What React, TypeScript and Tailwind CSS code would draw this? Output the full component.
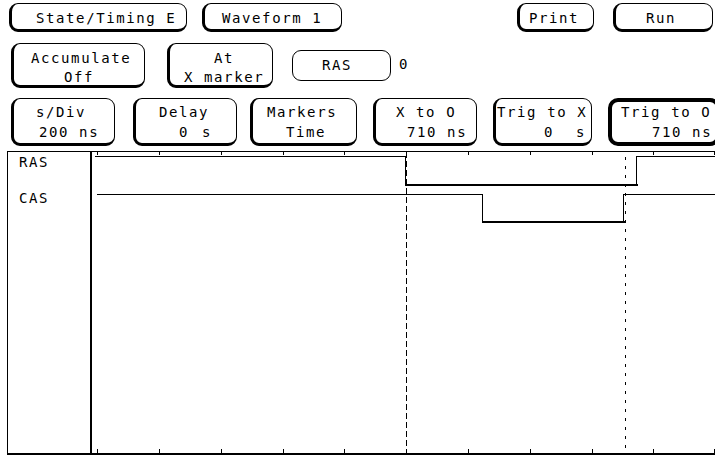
import React from "react";

function Btn({ className, children }: { className: string; children: React.ReactNode }) {
  return <div className={"shrink-0 box-border border-black bg-white " + className}>{children}</div>;
}

const ticks = [5, 67, 129, 191, 252, 314, 376, 438, 500, 561, 622];

export default function App() {
  return (
    <div className="w-[715px] h-[459px] bg-white overflow-hidden text-black font-['DejaVu_Sans_Mono',monospace] text-[14px] tracking-[1.6px] whitespace-pre">
      {/* Row 1 */}
      <div className="flex pt-[3px]">
        <Btn className="ml-[9px] w-[178px] h-[29px] rounded-[9px] border border-l-[3px] border-b-[3px] pt-[4px] leading-[20px]">
          <div className="pl-[24px]">State/Timing E</div>
        </Btn>
        <Btn className="ml-[15px] w-[140px] h-[29px] rounded-[9px] border border-l-[3px] border-b-[3px] pt-[4px] leading-[20px]">
          <div className="pl-[17px]">Waveform 1</div>
        </Btn>
        <Btn className="ml-[175px] w-[77px] h-[29px] rounded-[9px] border border-l-[3px] border-b-[3px] pt-[4px] leading-[20px]">
          <div className="pl-[9px]">Print</div>
        </Btn>
        <Btn className="ml-[19px] w-[100px] h-[29px] rounded-[9px] border border-l-[3px] border-b-[3px] pt-[4px] leading-[20px]">
          <div className="pl-[30px]">Run</div>
        </Btn>
      </div>

      {/* Row 2 */}
      <div className="flex items-start mt-[11px]">
        <Btn className="ml-[11px] w-[134px] h-[45px] rounded-[9px] border border-l-[3px] border-b-[3px] pt-[5px] leading-[18.5px]">
          <div className="pl-[17px]">Accumulate</div>
          <div className="pl-[50px]">Off</div>
        </Btn>
        <Btn className="ml-[22px] w-[106px] h-[45px] rounded-[9px] border border-l-[3px] border-b-[3px] pt-[5px] leading-[18.5px]">
          <div className="pl-[44px]">At</div>
          <div className="pl-[14px]">X marker</div>
        </Btn>
        <Btn className="ml-[19px] mt-[7px] w-[99px] h-[31px] rounded-[9px] border pt-[4px] leading-[20px]">
          <div className="pl-[29px]">RAS</div>
        </Btn>
        <div className="shrink-0 ml-[8px] mt-[11px] leading-[20px]">0</div>
      </div>

      {/* Row 3 */}
      <div className="flex items-start mt-[10px]">
        <Btn className="ml-[11px] w-[104px] h-[48px] rounded-[9px] border border-l-[3px] border-b-[3px] pt-[3px] leading-[20px]">
          <div className="pl-[22px]">s/Div</div>
          <div className="pl-[25px]">200 ns</div>
        </Btn>
        <Btn className="ml-[18px] w-[104px] h-[48px] rounded-[9px] border border-l-[3px] border-b-[3px] pt-[3px] leading-[20px]">
          <div className="pl-[23px]">Delay</div>
          <div className="pl-[43px] flex">
            <span>0</span>
            <span className="ml-[13px]">s</span>
          </div>
        </Btn>
        <Btn className="ml-[13px] w-[107px] h-[48px] rounded-[9px] border border-l-[3px] border-b-[3px] pt-[3px] leading-[20px]">
          <div className="pl-[14px]">Markers</div>
          <div className="pl-[33px]">Time</div>
        </Btn>
        <Btn className="ml-[16px] w-[104px] h-[48px] rounded-[9px] border border-l-[3px] border-b-[3px] pt-[3px] leading-[20px]">
          <div className="pl-[20px]">X to O</div>
          <div className="pl-[31px]">710 ns</div>
        </Btn>
        <Btn className="ml-[16px] w-[99px] h-[48px] rounded-[9px] border border-l-[3px] border-b-[3px] pt-[3px] leading-[20px]">
          <div className="pl-[1px]">Trig to X</div>
          <div className="pl-[48px] flex">
            <span>0</span>
            <span className="ml-[22px]">s</span>
          </div>
        </Btn>
        <Btn className="ml-[16px] w-[112px] h-[48px] rounded-[10px] border-[4px] pt-[0px] leading-[20px]">
          <div className="pl-[9px]">Trig to O</div>
          <div className="pl-[40px]">710 ns</div>
        </Btn>
      </div>

      {/* Waveform area */}
      <div className="flex mt-[5px] h-[304px]">
        <div className="shrink-0 ml-[7px] w-[85px] h-[304px] box-border border-l border-t border-r-2 border-b-2 border-black leading-[20px] pl-[11px]">
          <div>RAS</div>
          <div className="mt-[16px]">CAS</div>
        </div>
        <svg width="623" height="304" className="shrink-0 block" shapeRendering="crispEdges">
          <line x1="0" y1="0.5" x2="623" y2="0.5" stroke="black" strokeWidth="1" />
          {ticks.map((t) => (
            <line key={"t" + t} x1={t + 0.5} y1="0" x2={t + 0.5} y2="4" stroke="black" strokeWidth="1" />
          ))}
          <line x1="0" y1="303" x2="623" y2="303" stroke="black" strokeWidth="2" />
          {ticks.map((t) => (
            <line key={"b" + t} x1={t + 0.5} y1="298" x2={t + 0.5} y2="303" stroke="black" strokeWidth="1" />
          ))}
          {/* RAS */}
          <path d="M3 5.5 H313.5 V34 M544.5 34 V5.5 H623" fill="none" stroke="black" strokeWidth="1" />
          <path d="M313 34 H545.5" fill="none" stroke="black" strokeWidth="2" />
          {/* CAS */}
          <path d="M5 43.5 H390.5 V70.5 M531.5 70.5 V43.5 H623" fill="none" stroke="black" strokeWidth="1" />
          <path d="M390 70.5 H532.5" fill="none" stroke="black" strokeWidth="2" />
          {/* X marker */}
          <line x1="314.5" y1="1" x2="314.5" y2="302" stroke="black" strokeWidth="1.5" strokeDasharray="6 3" />
          {/* O marker */}
          <line x1="533.5" y1="6" x2="533.5" y2="302" stroke="black" strokeWidth="1.5" strokeDasharray="3 6" />
        </svg>
      </div>
    </div>
  );
}
